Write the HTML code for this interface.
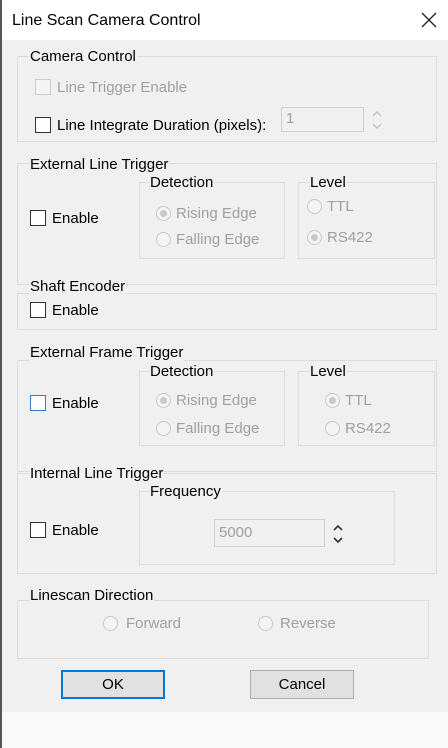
<html><head><style>
body{margin:0;width:448px;height:748px;background:#f0f0f0;font-family:"Liberation Sans",sans-serif;font-size:15px;color:#000;position:relative;overflow:hidden}
.a{position:absolute}
.g{position:absolute;border:1px solid #dcdcdc}
.l{position:absolute;background:#f0f0f0;padding:1px 1px 0;line-height:16px;white-space:nowrap}
.cb{position:absolute;width:14px;height:14px;border:1px solid #333;background:#fff}
.cb.d{border-color:#ccc;background:#f4f4f4}
.r{position:absolute;width:13px;height:13px;border:1px solid #c8c8c8;border-radius:50%;background:#f4f4f4}
.r.s::after{content:"";position:absolute;left:3px;top:3px;width:7px;height:7px;border-radius:50%;background:#c8c8c8}
.t{position:absolute;line-height:16px;white-space:nowrap;padding-top:1px}
.dis{color:#a0a0a0}
.in{position:absolute;border:1px solid #d0d0d0;background:#f0f0f0;color:#a0a0a0;line-height:22px;padding-left:4px;box-sizing:border-box}
.btn{position:absolute;background:#e1e1e1;border:1px solid #adadad;text-align:center;line-height:27px;box-sizing:border-box}
.sp{position:absolute;width:12px;height:24px}
</style></head><body>
<div class="a" style="left:0;top:0;width:448px;height:40px;background:#fff"></div>
<div class="a" style="left:0;top:0;width:2px;height:748px;background:#555"></div>
<div class="t" style="left:12px;top:12px;font-size:16px">Line Scan Camera Control</div>
<svg class="a" style="left:421px;top:12px" width="16" height="16"><path d="M1 1L15 15M15 1L1 15" stroke="#222" stroke-width="1.3"/></svg>

<div class="g" style="left:17px;top:56px;width:418px;height:84px"></div>
<div class="l" style="left:29px;top:48px">Camera Control</div>
<div class="cb d" style="left:35px;top:79px"></div><div class="t dis" style="left:57px;top:79px">Line Trigger Enable</div>
<div class="cb" style="left:35px;top:117px"></div><div class="t" style="left:57px;top:117px">Line Integrate Duration (pixels):</div>
<div class="in" style="left:281px;top:107px;width:83px;height:25px">1</div>
<svg class="sp" style="left:371px;top:108px"><path d="M2 8L6 4L10 8M2 16L6 20L10 16" fill="none" stroke="#c4c4c4" stroke-width="1.5"/></svg>

<div class="g" style="left:17px;top:163px;width:418px;height:120px"></div>
<div class="l" style="left:29px;top:156px">External Line Trigger</div>
<div class="g" style="left:139px;top:182px;width:144px;height:75px"></div>
<div class="l" style="left:149px;top:174px">Detection</div>
<div class="g" style="left:298px;top:182px;width:135px;height:75px"></div>
<div class="l" style="left:309px;top:174px">Level</div>
<div class="cb" style="left:30px;top:210px"></div><div class="t" style="left:52px;top:210px">Enable</div>
<div class="r s" style="left:156px;top:206px"></div><div class="t dis" style="left:176px;top:205px">Rising Edge</div>
<div class="r" style="left:156px;top:232px"></div><div class="t dis" style="left:176px;top:231px">Falling Edge</div>
<div class="r" style="left:307px;top:199px"></div><div class="t dis" style="left:327px;top:198px">TTL</div>
<div class="r s" style="left:307px;top:230px"></div><div class="t dis" style="left:327px;top:229px">RS422</div>

<div class="g" style="left:17px;top:293px;width:418px;height:35px"></div>
<div class="l" style="left:29px;top:278px">Shaft Encoder</div>
<div class="cb" style="left:30px;top:302px"></div><div class="t" style="left:52px;top:302px">Enable</div>

<div class="g" style="left:17px;top:360px;width:418px;height:110px"></div>
<div class="l" style="left:29px;top:344px">External Frame Trigger</div>
<div class="g" style="left:139px;top:371px;width:144px;height:73px"></div>
<div class="l" style="left:149px;top:363px">Detection</div>
<div class="g" style="left:298px;top:371px;width:135px;height:73px"></div>
<div class="l" style="left:309px;top:363px">Level</div>
<div class="cb" style="left:30px;top:395px;border-color:#3c78c8"></div><div class="t" style="left:52px;top:395px">Enable</div>
<div class="r s" style="left:156px;top:393px"></div><div class="t dis" style="left:176px;top:392px">Rising Edge</div>
<div class="r" style="left:156px;top:421px"></div><div class="t dis" style="left:176px;top:420px">Falling Edge</div>
<div class="r s" style="left:325px;top:393px"></div><div class="t dis" style="left:345px;top:392px">TTL</div>
<div class="r" style="left:325px;top:421px"></div><div class="t dis" style="left:345px;top:420px">RS422</div>

<div class="g" style="left:17px;top:473px;width:418px;height:99px"></div>
<div class="l" style="left:29px;top:465px">Internal Line Trigger</div>
<div class="g" style="left:139px;top:491px;width:254px;height:72px"></div>
<div class="l" style="left:149px;top:483px">Frequency</div>
<div class="cb" style="left:30px;top:522px"></div><div class="t" style="left:52px;top:522px">Enable</div>
<div class="in" style="left:214px;top:519px;width:111px;height:28px;line-height:26px">5000</div>
<svg class="sp" style="left:332px;top:522px"><path d="M2 8L6 4L10 8M2 16L6 20L10 16" fill="none" stroke="#333" stroke-width="1.6"/></svg>

<div class="g" style="left:17px;top:600px;width:410px;height:57px"></div>
<div class="l" style="left:29px;top:587px">Linescan Direction</div>
<div class="r" style="left:103px;top:616px"></div><div class="t dis" style="left:126px;top:615px">Forward</div>
<div class="r" style="left:258px;top:616px"></div><div class="t dis" style="left:280px;top:615px">Reverse</div>

<div class="btn" style="left:61px;top:670px;width:104px;height:29px;border:2px solid #0078d7;line-height:26px">OK</div>
<div class="btn" style="left:250px;top:670px;width:104px;height:29px">Cancel</div>
<div class="a" style="left:2px;top:712px;width:446px;height:36px;background:#fafafa"></div>
</body></html>
